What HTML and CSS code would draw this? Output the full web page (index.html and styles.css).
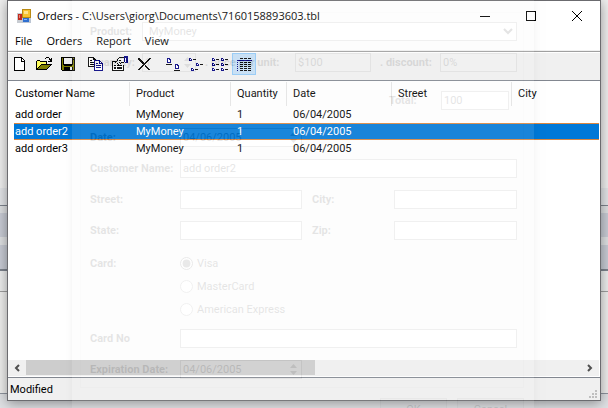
FILE: index.html
```html
<!DOCTYPE html>
<html lang="en">
<head>
<meta charset="utf-8">
<title>Orders</title>
<link rel="stylesheet" href="styles.css">
</head>
<body>
<main class="window">
  <header class="titlebar">
    <svg class="app-icon" width="14" height="14" viewBox="0 0 14 14" shape-rendering="crispEdges">
      <rect x="0" y="4" width="5" height="10" fill="#c8ccd2"/><rect x="1" y="5" width="4" height="6" fill="#c22a1c"/><rect x="2" y="6" width="1" height="3" fill="#e88478"/>
      <rect x="5" y="0" width="9" height="9" fill="#b98a14"/><rect x="6" y="1" width="7" height="7" fill="#f8c22e"/><rect x="7" y="2" width="4" height="3" fill="#ffe38b"/>
      <rect x="5" y="9" width="9" height="5" fill="#bcc6d4"/><rect x="6" y="9" width="6" height="4" fill="#2f6fd0"/><rect x="7" y="10" width="3" height="1" fill="#8db8f2"/>
    </svg>
    <h1 class="title">Orders - C:\Users\giorg\Documents\7160158893603.tbl</h1>
    <button class="caption" aria-label="Minimize"><svg width="10" height="10"><path d="M0 5.5H10" stroke="#000"/></svg></button>
    <button class="caption" aria-label="Maximize"><svg width="10" height="10"><rect x=".5" y=".5" width="9" height="9" fill="none" stroke="#000"/></svg></button>
    <button class="caption" aria-label="Close"><svg width="10" height="10"><path d="M0 0L10 10M10 0L0 10" stroke="#000"/></svg></button>
  </header>
  <nav class="menu">
    <button>File</button><button>Orders</button><button>Report</button><button>View</button>
  </nav>
  <div class="toolbar">
    <button aria-label="New"><svg width="16" height="16" shape-rendering="crispEdges"><path d="M2 1h8v1h1v1h1v1h1v11H2z" fill="#000"/><path d="M3 2h6v4h3v8H3zM10 3h1v1h1v1h-2z" fill="#fff"/></svg></button>
    <button aria-label="Open"><svg width="16" height="16" shape-rendering="crispEdges"><path d="M9 2h1V1h3v1h1v1h1V2h1v4h-4V5h2V4h-1V2h-3v1H9zM1 4h3v1h7v3h5v1h-1v1h-1v1h-1v1h-1v1h-1v1H0V5h1z" fill="#000"/><path d="M1 5h3v1h6v2H5v1H4v1H3v1H2v1H1z" fill="#ffff60"/><path d="M5 9h9v1h-1v1h-1v1h-1v1H2v-1h1v-1h1v-1h1z" fill="#808000"/></svg></button>
    <button aria-label="Save"><svg width="16" height="16" shape-rendering="crispEdges"><path d="M1 1h14v14H2v-1H1z" fill="#000"/><path d="M2 2h1v7h1v1h8V9h1V4h1v10H2zM13 2h1v1h-1z" fill="#808000"/><path d="M4 2h8v6H4z" fill="#f0f0f0"/><path d="M4 11h9v3H4z" fill="#000"/><path d="M10 11h2v3h-2z" fill="#f0f0f0"/></svg></button>
    <button class="group-start" aria-label="Copy"><svg width="16" height="16" shape-rendering="crispEdges"><path d="M0 1h6v1h1v1h1v8H0z" fill="#000"/><path d="M1 2h4v2h2v6H1z" fill="#fff"/><path d="M2 4h2v1H2zM2 6h4v1H2zM2 8h4v1H2z" fill="#000"/><path d="M6 4h6v1h1v1h1v1h1v8H6z" fill="#000080"/><path d="M7 5h4v3h3v6H7zM12 6h1v1h-1z" fill="#fff"/><path d="M8 7h2v1H8zM8 9h5v1H8zM8 11h5v1H8z" fill="#000080"/></svg></button>
    <button aria-label="Properties"><svg width="16" height="16" shape-rendering="crispEdges"><path d="M0 5h5v1H1v8h10V9h1v6H0zM5 3h1V2h1V1h5v1H7v1H6v2H5zM4 5h1v1H4zM3 6h1v1H3zM5 7h1v1H5zM7 6h1v1H7zM6 8h1v1H6zM8 7h1v1H8zM9 6h3v1H9zM7 4h2v1H7zM2 9h2v1H2zM5 9h5v1H5zM2 11h2v1H2zM5 11h5v1H5z" fill="#000"/><path d="M1 8h3v1H1zM4 10h6v1H4zM1 12h10v2H1zM6 3h6v3H9V5H6z" fill="#fff"/><path d="M7 4h2v1H7zM2 12h2v1H2zM5 12h5v1H5z" fill="#000"/><path d="M12 0h4v7h-3V6h-1z" fill="#000080"/><path d="M13 2h1v4h-1z" fill="#fff"/></svg></button>
    <button aria-label="Delete"><svg width="16" height="16" shape-rendering="crispEdges"><path d="M2 2h2v1h1v1h1v1h1v1h1v1h1V6h1V5h1V4h1V3h1V2h2v1h-1v1h-1v1h-1v1h-1v1h-1v1h-1v1h1v1h1v1h1v1h1v1h1v1h-2v-1h-1v-1h-1v-1h-1v-1H9V9H8v1H7v1H6v1H5v1H4v1H2v-1h1v-1h1v-1h1v-1h1V9h1V8H6V7H5V6H4V5H3V4H2z"/></svg></button>
    <button class="group-start" aria-label="Large icons"><svg width="16" height="16" shape-rendering="crispEdges"><path d="M3 2h3v1h1v4H3zM11 8h3v1h1v4h-4z" fill="#000080"/><path d="M4 3h1v1h1v2H4zM12 9h1v1h1v2h-2z" fill="#fff"/><path d="M2 8h6v1H2zM10 14h6v1h-6z"/></svg></button>
    <button aria-label="Small icons"><svg width="16" height="16" shape-rendering="crispEdges"><path d="M1 2h2v1h1v2H1zM8 7h2v1h1v2H8zM3 12h2v1h1v2H3z" fill="#000080"/><path d="M2 3h1v1H2zM9 8h1v1H9zM4 13h1v1H4z" fill="#fff"/><path d="M5 3h3v1H5zM12 8h3v1h-3zM7 13h3v1H7z"/></svg></button>
    <button aria-label="List"><svg width="16" height="16" shape-rendering="crispEdges"><path d="M0 2h2v1h1v2H0zM9 2h2v1h1v2H9zM0 7h2v1h1v2H0zM9 7h2v1h1v2H9zM0 12h2v1h1v2H0zM9 12h2v1h1v2H9z" fill="#000080"/><path d="M1 3h1v1H1zM10 3h1v1h-1zM1 8h1v1H1zM10 8h1v1h-1zM1 13h1v1H1zM10 13h1v1h-1z" fill="#fff"/><path d="M4 3h3v1H4zM13 3h3v1h-3zM4 8h3v1H4zM13 8h3v1h-3zM4 13h3v1H4zM13 13h3v1h-3z"/></svg></button>
    <button class="active" aria-label="Details" aria-pressed="true"><svg width="16" height="16" shape-rendering="crispEdges"><path d="M1 4h15v1H1zM1 6h1v1H1zM1 8h1v1H1zM1 10h1v1H1zM1 12h1v1H1zM1 14h1v1H1z" fill="#000080"/><path d="M4 2.5h12M4 6.5h12M4 8.5h12M4 10.5h12M4 12.5h12M4 14.5h12" stroke="#000" stroke-dasharray="3 1"/></svg></button>
  </div>
  <section class="list">
    <table class="orders">
      <colgroup><col class="c-name"><col class="c-product"><col class="c-qty"><col class="c-date"><col class="c-street"><col></colgroup>
      <thead><tr><th>Customer Name</th><th>Product</th><th>Quantity</th><th>Date</th><th>Street</th><th>City</th></tr></thead>
      <tbody>
        <tr><td>add order</td><td>MyMoney</td><td>1</td><td>06/04/2005</td><td></td><td></td></tr>
        <tr class="selected"><td>add order2</td><td>MyMoney</td><td>1</td><td>06/04/2005</td><td></td><td></td></tr>
        <tr><td>add order3</td><td>MyMoney</td><td>1</td><td>06/04/2005</td><td></td><td></td></tr>
      </tbody>
    </table>
    <div class="scrollbar">
      <button aria-label="Scroll left"><svg width="6" height="8"><path d="M5 1L2 4L5 7" fill="none" stroke="#505050" stroke-width="2"/></svg></button>
      <div class="track"><div class="thumb"></div></div>
      <button aria-label="Scroll right"><svg width="6" height="8"><path d="M1 1L4 4L1 7" fill="none" stroke="#505050" stroke-width="2"/></svg></button>
    </div>
  </section>
  <footer class="status">Modified
    <svg width="10" height="10" fill="#bfbfbf" shape-rendering="crispEdges"><path d="M6 0h2v2H6zM3 3h2v2H3zM6 3h2v2H6zM0 6h2v2H0zM3 6h2v2H3zM6 6h2v2H6z"/></svg>
  </footer>
</main>

<form class="ghost">
  <div class="panel">
    <div class="row product"><label for="product">Product:</label><select id="product"><option>MyMoney</option></select></div>
    <div class="row pricing">
      <label for="qty">Quantity:</label><span class="spin"><input id="qty" value="1"><i></i></span>
      <label for="price">. price per unit:</label><input id="price" value="$100">
      <label for="discount">. discount:</label><input id="discount" value="0%">
    </div>
    <div class="row total"><label for="total">Total:</label><input id="total" value="100"></div>
    <div class="row"><label for="date">Date:</label><span class="spin"><input id="date" value="04/06/2005"><i></i></span></div>
    <div class="row"><label for="name">Customer Name:</label><input id="name" value="add order2"></div>
    <div class="row pair"><label for="street">Street:</label><input id="street"><label for="city">City:</label><input id="city"></div>
    <div class="row pair"><label for="state">State:</label><input id="state"><label for="zip">Zip:</label><input id="zip"></div>
    <fieldset class="cards">
      <legend>Card:</legend>
      <label><input type="radio" name="card" checked>Visa</label>
      <label><input type="radio" name="card">MasterCard</label>
      <label><input type="radio" name="card">American Express</label>
    </fieldset>
    <div class="row"><label for="cardno">Card No</label><input id="cardno"></div>
    <div class="row"><label for="expires">Expiration Date:</label><span class="spin"><input id="expires" value="04/06/2005"><i></i></span></div>
  </div>
  <div class="actions"><button type="button">OK</button><button type="button">Cancel</button></div>
</form>
</body>
</html>
```

FILE: styles.css
```css
* { box-sizing: border-box; }

body {
  margin: 0;
  height: 100vh;
  overflow: hidden;
  position: relative;
  padding: 0 7px 7px;
  font: 11px/15px Roboto, "Liberation Sans", sans-serif;
  color: #000;
  background: linear-gradient(#f0f0f0 188px, #e4e6e9 188px 205px, #7e848e 205px 206px, #dfe1e3 206px 213px, #c9cdd6 213px 237px, #e0e2e4 237px 245px, #c9cdd6 245px 269px, #7e848e 269px 271px, #eeefef 271px 291px, #a0a0a0 291px 292px, #f0f0ef 292px 393px, #8f959f 393px 394px, #dfe1e4 394px);
}

button, input, select { font: inherit; color: inherit; }

.window {
  height: 100%;
  display: flex;
  flex-direction: column;
  background: #f0f0f0;
  border: 1px solid #6b6b6f;
  box-shadow: 0 2px 12px rgba(0, 0, 0, .4);
}

.titlebar, .menu {
  display: flex;
  align-items: center;
  background: #fff;
  font-family: "Open Sans", sans-serif;
}

.titlebar { height: 29px; padding-left: 9px; }
.app-icon { margin-right: 6px; }
.title { flex: 1; margin: 0; font-size: 11px; font-weight: 400; white-space: nowrap; }

.caption {
  width: 46px;
  height: 28px;
  padding: 0;
  border: 0;
  background: none;
  display: grid;
  place-items: center;
}

.menu { height: 21px; border-bottom: 1px solid #f0f0f0; }
.menu button { padding: 0 7px; border: 0; background: none; }

.toolbar {
  height: 29px;
  display: flex;
  border-top: 1px solid #a0a0a0;
  box-shadow: inset 0 1px #fff;
  padding-top: 1px;
}

.toolbar button {
  width: 24px;
  height: 22px;
  padding: 0;
  border: 1px solid transparent;
  background: none;
  display: grid;
  place-items: center;
}

.toolbar .group-start { margin-left: 4px; }
.toolbar .active { background: #c5dff5; border-color: #91c9f7; }

.list {
  flex: 1;
  min-height: 0;
  display: flex;
  flex-direction: column;
  justify-content: space-between;
  background: #fff;
  border-top: 1px solid #828790;
  border-bottom: 1px solid #828790;
  padding: 1px 1px 1px 0;
}

.orders {
  width: calc(100% - 6px);
  margin-left: 6px;
  table-layout: fixed;
  border-collapse: separate;
  border-spacing: 0;
}

.c-name { width: 116px; }
.c-product { width: 101px; }
.c-qty { width: 56px; }
.c-date { width: 105px; }
.c-street { width: 120px; }

th, td { height: 17px; padding: 0 0 0 6px; text-align: left; font-weight: 400; white-space: nowrap; }
th { height: 24px; padding-bottom: 1px; border-right: 1px solid #e5e5e5; }
th:last-child { border-right: 0; }
th:first-child, td:first-child { padding-left: 1px; }

.selected td {
  color: #fff;
  background: #0078d7;
  border-top: 1px solid #d98640;
  border-bottom: 1px solid #d98640;
}

.scrollbar { display: flex; height: 16px; background: #f0f0f0; }
.scrollbar button { width: 18px; padding: 0; border: 0; background: none; display: grid; place-items: center; }
.track { flex: 1; }
.thumb { width: 52%; height: 15px; background: #cdcdcd; }

.status { height: 22px; padding: 0 1px 0 2px; display: flex; align-items: center; justify-content: space-between; }
.status svg { align-self: flex-end; }

/* Fading order dialog over the window */
.ghost {
  position: absolute;
  left: 72px;
  top: 0;
  width: 462px;
  height: 100%;
  padding: 12px 10px 0 8px;
  opacity: .1;
  pointer-events: none;
  background: #f0f0f0;
  box-shadow: 0 0 8px rgba(0, 0, 0, .5);
  overflow: hidden;
}

.panel {
  height: 376px;
  padding: 9px 6px 0 9px;
  border: 1px solid #dcdcdc;
  display: flex;
  flex-direction: column;
  gap: 12px;
}

.row { display: grid; grid-template-columns: 90px 1fr; align-items: center; height: 19px; flex: none; }
.row > label, legend { font-weight: 700; white-space: nowrap; }
.ghost input, .ghost select { width: 100%; min-width: 0; height: 19px; padding: 0 2px; border: 1px solid #7a7a7a; background: #fff; }
.product { grid-template-columns: 52px 1fr; }
.pricing { grid-template-columns: 52px 54px 99px 76px 69px 1fr; }
.pricing label + input + label, .pricing .spin + label { padding-left: 9px; }
.total { grid-template-columns: 52px 68px; justify-content: end; padding-right: 8px; margin: 7px 0 6px; }
.pair { grid-template-columns: 90px 122px 92px 1fr; }
.pair label + input + label { padding-left: 10px; }
.spin { display: flex; width: 122px; max-width: 100%; position: relative; }
.spin i { position: absolute; right: 5px; top: 4px; width: 7px; height: 11px; background: #444; clip-path: polygon(50% 0, 100% 4px, 0 4px, 0 7px, 100% 7px, 50% 100%, 0 7px, 0 4px); }
.cards { display: flex; flex-direction: column; gap: 8px; height: 65px; margin: 0; padding: 4px 0 0 90px; border: 0; position: relative; flex: none; }
.cards legend { position: absolute; left: 0; top: 4px; padding: 0; }
.cards label { display: flex; align-items: center; gap: 4px; align-self: flex-start; }
.ghost .cards input { width: 13px; height: 13px; margin: 0; accent-color: #333; }
.actions { display: flex; justify-content: flex-end; gap: 10px; padding-top: 10px; }
.actions button { width: 67px; height: 23px; padding: 0; border: 1px solid #adadad; background: #e1e1e1; }
```
